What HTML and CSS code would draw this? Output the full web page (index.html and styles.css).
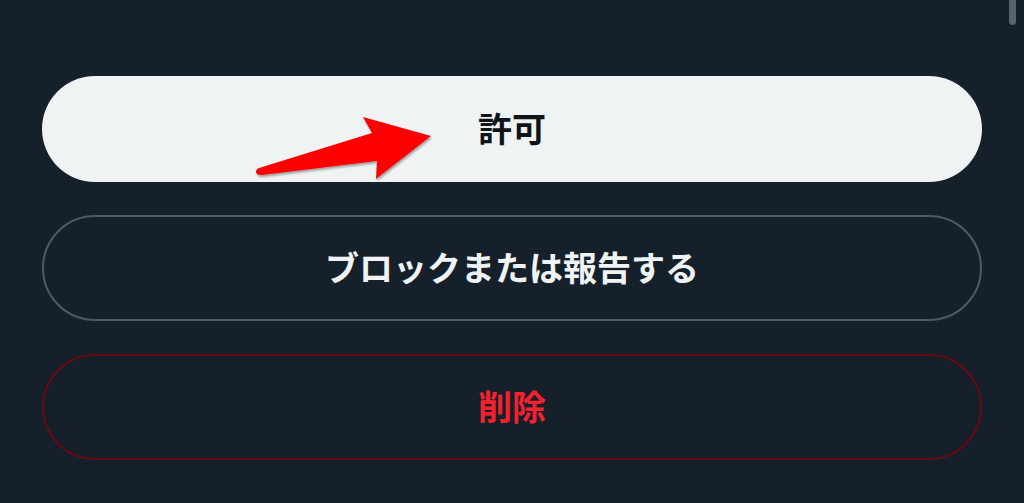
FILE: index.html
```html
<!DOCTYPE html>
<html lang="ja">
<head>
    <meta charset="UTF-8">
    <meta name="viewport" content="width=device-width, initial-scale=1.0">
    <title>メッセージリクエスト</title>
    <link rel="stylesheet" href="styles.css">
</head>
<body>
    <div class="scroll-thumb"></div>

    <div class="actions">
        <button class="btn btn-allow">許可</button>
        <button class="btn btn-block">ブロックまたは報告する</button>
        <button class="btn btn-delete">削除</button>
    </div>

    <!-- annotation arrow pointing at the allow button -->
    <svg class="arrow" width="1024" height="503" viewBox="0 0 1024 503">
        <defs>
            <filter id="shadow" x="-10%" y="-10%" width="120%" height="130%">
                <feDropShadow dx="1" dy="2" stdDeviation="1.2" flood-color="#000" flood-opacity="0.35"/>
            </filter>
        </defs>
        <path filter="url(#shadow)" fill="#ff0000"
              d="M259 168 L372 133 L363 117 L431 136 L376 179 L377 161 L262 175 Q256 175 256 172 Q256 169 259 168 Z"/>
    </svg>
</body>
</html>
```

FILE: styles.css
```css
body {
    margin: 0;
    height: 100vh;
    overflow: hidden;
    background-color: #15202b;
    font-family: "Noto Sans CJK JP", "Noto Sans", sans-serif;
}

.scroll-thumb {
    position: absolute;
    top: 0;
    right: 8px;
    width: 7px;
    height: 25px;
    background-color: #56636f;
    border-radius: 0 0 4px 4px;
}

.actions {
    display: flex;
    flex-direction: column;
    gap: 33px;
    padding: 76px 42px 0;
}

.btn {
    height: 106px;
    border-radius: 53px;
    padding-bottom: 4px;
    font-family: inherit;
    font-size: 34px;
    font-weight: 700;
    cursor: pointer;
    background: transparent;
}

.btn-allow {
    background-color: #eff3f4;
    color: #0f1419;
    border: none;
}

.btn-block {
    color: #eff3f4;
    border: 2px solid #4e5b67;
}

.btn-delete {
    color: #f4212e;
    border: 2px solid #6b0912;
}

.arrow {
    position: absolute;
    top: 0;
    left: 0;
    pointer-events: none;
}
```
